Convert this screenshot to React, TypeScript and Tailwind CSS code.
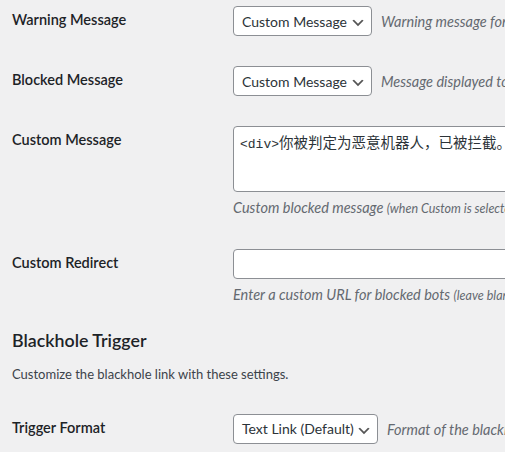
// WordPress-style settings form (bot blocker options)
const font = { fontFamily: 'Lato, "Noto Sans", "Noto Sans CJK SC", sans-serif' };

function Chevron() {
  return (
    <svg viewBox="0 0 20 20" className="absolute right-[5px] top-[8px] h-4 w-4" aria-hidden>
      <path d="M5 6l5 5 5-5 2 1-7 7-7-7 2-1z" fill="#555" />
    </svg>
  );
}

function Select({ value, width }: { value: string; width: string }) {
  return (
    <div
      className={`relative inline-flex h-[30px] shrink-0 items-center rounded-[4px] border border-[#8c8f94] bg-white pl-2 pr-6 text-[14px] text-[#2c3338] ${width}`}
    >
      <span className="whitespace-nowrap">{value}</span>
      <Chevron />
    </div>
  );
}

function Row({ label, children }: { label: string; children: React.ReactNode }) {
  return (
    <div className="flex">
      <div className="w-[221px] shrink-0 pt-[20px] text-[14.5px] font-semibold leading-[18px] text-[#1d2327]">
        {label}
      </div>
      <div className="flex-1 py-[15px]">{children}</div>
    </div>
  );
}

function Desc({ children }: { children: React.ReactNode }) {
  return <span className="whitespace-nowrap text-[14.5px] italic text-[#646970]">{children}</span>;
}

export default function App() {
  return (
    <div className="h-[452px] w-[505px] overflow-hidden bg-[#f0f0f1]" style={font}>
      <div className="-mt-[9px] w-[900px] pl-3">
        <Row label="Warning Message">
          <div className="flex items-center">
            <Select value="Custom Message" width="w-[139px]" />
            <span className="ml-[9px]">
              <Desc>Warning message for bad bots</Desc>
            </span>
          </div>
        </Row>

        <Row label="Blocked Message">
          <div className="flex items-center">
            <Select value="Custom Message" width="w-[139px]" />
            <span className="ml-[9px]">
              <Desc>Message displayed to blocked bots</Desc>
            </span>
          </div>
        </Row>

        <Row label="Custom Message">
          <div className="h-[66px] w-[600px] rounded-[4px] border border-[#8c8f94] bg-white px-[6px] pt-[5px] text-[14px] leading-[1.4] text-[#2c3338]">
            <span className="whitespace-nowrap">
              <span className="text-[13px]" style={{ fontFamily: '"Liberation Mono", monospace' }}>&lt;div&gt;</span>
              <span className="text-[14.5px]" style={{ fontFamily: '"Noto Sans CJK SC", sans-serif' }}>你被判定为恶意机器人，已被拦截。如有疑问请联系管理员。</span>
            </span>
          </div>
          <p className="mt-[4px] leading-[21px]">
            <Desc>
              Custom blocked message <span className="text-[12.5px]">(when Custom is selected as the Blocked Message)</span>
            </Desc>
          </p>
        </Row>

        <Row label="Custom Redirect">
          <div className="h-[30px] w-[600px] rounded-[4px] border border-[#8c8f94] bg-white" />
          <p className="mt-[4px] leading-[21px]">
            <Desc>
              Enter a custom URL for blocked bots <span className="text-[12.5px]">(leave blank to disable)</span>
            </Desc>
          </p>
        </Row>

        <h2 className="mt-[8px] text-[17.8px] font-semibold leading-[1.3] text-[#1d2327]">Blackhole Trigger</h2>
        <p className="mt-[13px] text-[13px] leading-[1.5] text-[#3c434a]">
          Customize the blackhole link with these settings.
        </p>

        <div className="mt-[14px]">
          <Row label="Trigger Format">
            <div className="flex items-center">
              <Select value="Text Link (Default)" width="w-[145px]" />
              <span className="ml-[9px]">
                <Desc>Format of the blackhole trigger link</Desc>
              </span>
            </div>
          </Row>
        </div>
      </div>
    </div>
  );
}
